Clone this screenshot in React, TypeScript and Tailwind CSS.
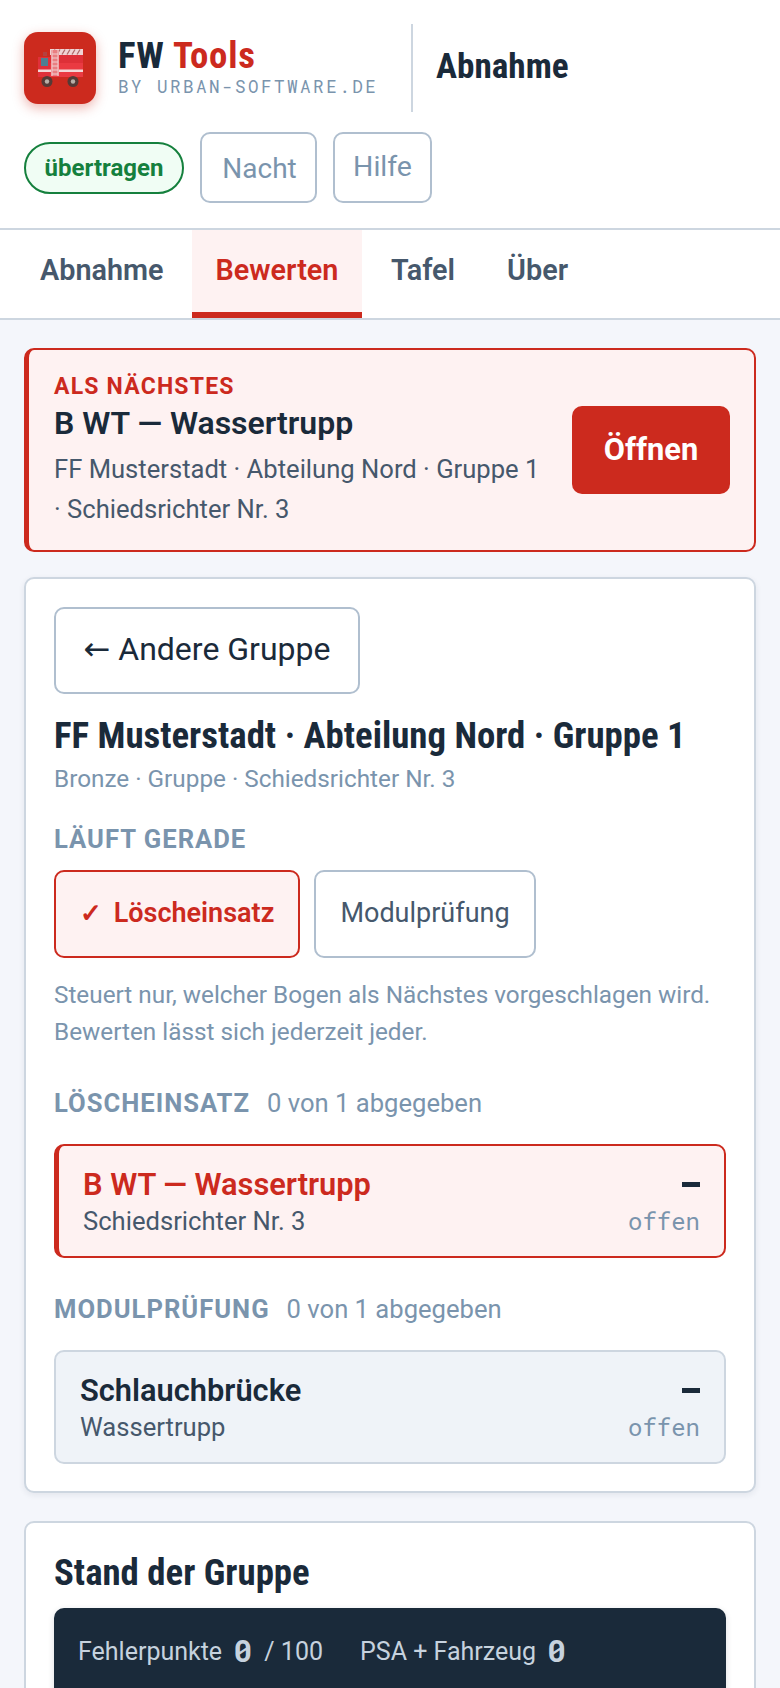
const sans = "font-['Roboto','Liberation_Sans',sans-serif]";

function FireTruck() {
  return (
    <svg viewBox="0 0 45 38" className="w-[45px] h-[38px]">
      <rect x="12" y="0" width="33" height="6" fill="#f0d4d4" />
      <path d="M14 5.500l3-5M19 5.500l3-5M24 5.500l3-5M29 5.500l3-5M34 5.500l3-5M39 5.500l3-5" stroke="#b06a6a" strokeWidth="1.300" />
      <rect x="12" y="6" width="33" height="22" fill="#ea3a42" />
      <rect x="12" y="6" width="33" height="8" fill="#de3038" />
      <rect x="0" y="8" width="12" height="20" fill="#e0303a" />
      <rect x="5" y="3" width="4" height="4" fill="#b5403f" />
      <rect x="3" y="9" width="7" height="8" fill="#4f7f92" />
      <rect x="0" y="20.500" width="45" height="2.500" fill="#f3d8d8" />
      <rect x="13" y="1" width="8" height="26" fill="#e97f82" />
      <path d="M14 1v26M20 1v26M14 5h6M14 9h6M14 13h6M14 17h6M14 21h6M14 25h6" stroke="#f2cfcf" strokeWidth="1" />
      <circle cx="9" cy="32.500" r="5.500" fill="#553a36" />
      <circle cx="9" cy="32.500" r="2.200" fill="#b9b0a8" />
      <circle cx="35" cy="32.500" r="5.500" fill="#553a36" />
      <circle cx="35" cy="32.500" r="2.200" fill="#b9b0a8" />
    </svg>
  );
}

function Kicker({ label, note }: { label: string; note: string }) {
  return (
    <div className="flex items-baseline gap-[17px]">
      <span className="text-[25.6px] leading-[32px] font-bold tracking-[1px] text-[#7a94ad]">{label}</span>
      <span className="text-[25.6px] leading-[32px] text-[#7a94ad]">{note}</span>
    </div>
  );
}

function BowRow({
  title,
  sub,
  active,
}: {
  title: string;
  sub: string;
  active?: boolean;
}) {
  return (
    <div
      className={
        active
          ? "flex justify-between items-center h-[114px] pl-[24px] pr-[24px] rounded-[10px] border-2 border-l-[5px] border-[#cc2a1e] bg-[#fef2f2]"
          : "flex justify-between items-center h-[114px] pl-[24px] pr-[24px] rounded-[10px] border-2 border-[#cdd6e0] bg-[#eff3f8]"
      }
    >
      <div className="pt-[2px]">
        <div className={active ? "text-[30.8px] leading-[38px] font-semibold text-[#cc2a1e]" : "text-[30.8px] leading-[38px] font-semibold text-[#1a2a3a]"}>
          {title}
        </div>
        <div className="text-[25.6px] leading-[34px] text-[#46586c]">{sub}</div>
      </div>
      <div className="flex flex-col items-end mt-[15px]">
        <div className="w-[18px] h-[5px] bg-[#1a2a3a] mb-[20px]" />
        <div className="font-['Roboto_Mono','DejaVu_Sans_Mono',monospace] text-[24px] leading-[28px] text-[#7a94ad]">offen</div>
      </div>
    </div>
  );
}

export default function App() {
  return (
    <div className={`${sans} w-[780px] h-[1688px] overflow-hidden bg-[#f4f6fb] text-[#1a2a3a]`}>
      {/* Header */}
      <header className="bg-white h-[228px] pl-[24px] pt-[24px]">
        <div className="flex items-center h-[88px]">
          <div className="w-[72px] h-[72px] rounded-[14px] bg-[#cc2a1e] shadow-[0_4px_12px_rgba(204,42,30,0.35)] flex items-center justify-center">
            <FireTruck />
          </div>
          <div className="ml-[22px] w-[293px]">
            <div className="font-['Roboto_Condensed','Roboto',sans-serif] text-[36.8px] leading-[36px] font-bold tracking-[0.8px]">
              FW <span className="text-[#cc2a1e]">Tools</span>
            </div>
            <div className="font-['Roboto_Mono','DejaVu_Sans_Mono',monospace] text-[17.6px] leading-[22px] tracking-[2.450px] text-[#7a94ad] mt-[2px]">
              BY URBAN-SOFTWARE.DE
            </div>
          </div>
          <div className="w-[2px] h-[88px] bg-[#cdd6e0]" />
          <div className="ml-[23px] font-['Roboto_Condensed','Roboto',sans-serif] text-[35.2px] leading-[44px] font-bold mb-[4px]">Abnahme</div>
        </div>
        <div className="flex items-center gap-[16px] mt-[20px]">
          <span className="w-[160px] h-[52px] rounded-full border-2 border-[#15803d] bg-[#f0fdf4] text-[#15803d] text-[24px] font-bold flex items-center justify-center">
            übertragen
          </span>
          <button className="w-[117px] h-[71px] rounded-[10px] border-2 border-[#b0bfcf] text-[28px] text-[#7a94ad] pt-[2px] pl-[2px]">Nacht</button>
          <button className="w-[99px] h-[71px] rounded-[10px] border-2 border-[#b0bfcf] text-[28.5px] text-[#7a94ad]">Hilfe</button>
        </div>
      </header>

      {/* Tabs */}
      <nav className="bg-white h-[92px] border-y-2 border-[#cdd6e0] flex text-[28.8px] leading-[40px] font-semibold text-[#46586c]">
        <div className="w-[192px] pl-[40px] pt-[20px]">Abnahme</div>
        <div className="w-[170px] text-center pt-[20px] bg-[#fef2f2] text-[#cc2a1e] border-b-[6px] border-[#cc2a1e]">Bewerten</div>
        <div className="pl-[29px] pt-[20px]">Tafel</div>
        <div className="pl-[52px] pt-[20px]">Über</div>
      </nav>

      <main className="px-[24px] pt-[28px] flex flex-col">
        {/* Next up */}
        <section className="h-[204px] rounded-[10px] border-2 border-l-[5px] border-[#cc2a1e] bg-[#fef2f2] pl-[25px] pr-[24px] flex items-center justify-between">
          <div>
            <div className="text-[23px] leading-[26px] font-bold tracking-[1.200px] text-[#cc2a1e] pt-[2px]">ALS NÄCHSTES</div>
            <div className="text-[32px] leading-[38px] font-semibold mt-[4px]">B WT — Wassertrupp</div>
            <div className="text-[25.6px] leading-[40px] text-[#46586c] w-[490px] mt-[7px]">
              FF Musterstadt · Abteilung Nord · Gruppe 1 · Schiedsrichter Nr. 3
            </div>
          </div>
          <button className="w-[158px] h-[88px] rounded-[10px] bg-[#cc2a1e] text-white text-[30.8px] font-bold">Öffnen</button>
        </section>

        {/* Group card */}
        <section className="mt-[25px] h-[916px] rounded-[10px] border-2 border-[#cdd6e0] bg-white px-[28px] pt-[28px] shadow-[0_2px_6px_rgba(26,42,58,0.08)]">
          <button className="w-[306px] h-[87px] rounded-[10px] border-2 border-[#b0bfcf] text-[32px] leading-[40px] pb-[4px]">
            <span className="font-['DejaVu_Sans',sans-serif] leading-[40px]">←</span> Andere Gruppe
          </button>
          <h2 className="font-['Roboto_Condensed','Roboto',sans-serif] text-[36.8px] leading-[42px] font-bold mt-[21px]">
            FF Musterstadt · Abteilung Nord · Gruppe 1
          </h2>
          <p className="text-[24.3px] leading-[32px] text-[#7a94ad] mt-[6px]">Bronze · Gruppe · Schiedsrichter Nr. 3</p>
          <div className="text-[25.6px] leading-[32px] font-bold tracking-[1px] text-[#7a94ad] mt-[28px]">LÄUFT GERADE</div>
          <div className="flex gap-[14px] mt-[15px]">
            <span className="w-[246px] h-[88px] rounded-[10px] border-2 border-[#cc2a1e] bg-[#fef2f2] text-[#cc2a1e] text-[27px] font-semibold flex items-center justify-center gap-[12px] pb-[2px]">
              <span className="font-bold text-[26px]">✓</span> Löscheinsatz
            </span>
            <span className="w-[222px] h-[88px] rounded-[10px] border-2 border-[#b0bfcf] text-[#46586c] text-[27px] flex items-center justify-center pb-[2px]">
              Modulprüfung
            </span>
          </div>
          <p className="text-[24.3px] leading-[37px] text-[#7a94ad] mt-[18px]">
            Steuert nur, welcher Bogen als Nächstes vorgeschlagen wird. Bewerten lässt sich jederzeit jeder.
          </p>
          <div className="mt-[37px] mb-[25px]">
            <Kicker label="LÖSCHEINSATZ" note="0 von 1 abgegeben" />
          </div>
          <BowRow title="B WT — Wassertrupp" sub="Schiedsrichter Nr. 3" active />
          <div className="mt-[35px] mb-[25px]">
            <Kicker label="MODULPRÜFUNG" note="0 von 1 abgegeben" />
          </div>
          <BowRow title="Schlauchbrücke" sub="Wassertrupp" />
        </section>

        {/* Group status */}
        <section className="mt-[28px] rounded-[10px] border-2 border-[#cdd6e0] bg-white px-[28px] pt-[29px] pb-[40px]">
          <h2 className="font-['Roboto_Condensed','Roboto',sans-serif] text-[36.8px] leading-[42px] font-bold">Stand der Gruppe</h2>
          <div className="mt-[14px] h-[200px] rounded-[10px] bg-[#1a2a3a] shadow-[0_2px_6px_rgba(26,42,58,0.15)] px-[24px] pt-[24px] flex items-start text-[25px] leading-[36px] text-[#c6d2de]">
            <span className="mt-[2px]">Fehlerpunkte</span>
            <span className="font-['Roboto_Mono','DejaVu_Sans_Mono',monospace] font-extrabold text-[32px] leading-[36px] ml-[11px]">0</span>
            <span className="ml-[12px] mt-[2px]">/ 100</span>
            <span className="ml-[37px] mt-[2px]">PSA + Fahrzeug</span>
            <span className="font-['Roboto_Mono','DejaVu_Sans_Mono',monospace] font-extrabold text-[32px] leading-[36px] ml-[11px]">0</span>
          </div>
        </section>
      </main>
    </div>
  );
}
